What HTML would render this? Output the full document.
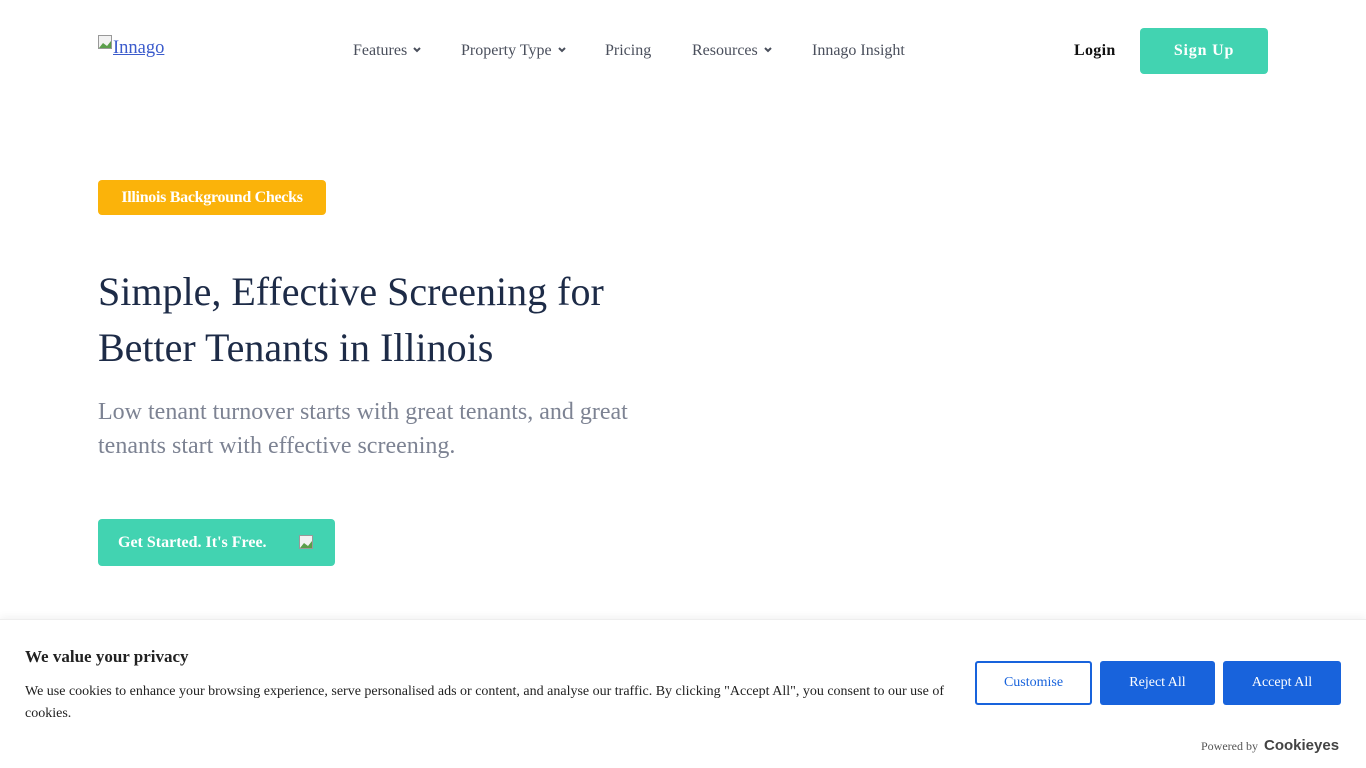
<!DOCTYPE html>
<html><head><meta charset="utf-8"><style>
*{margin:0;padding:0;box-sizing:border-box}
body{width:1366px;height:768px;overflow:hidden;background:#fff;font-family:"Liberation Serif",serif;position:relative}
.a{position:absolute;white-space:nowrap}
.nav{font-size:16px;color:#4a4f5c;top:42px}
.chev{display:inline-block;width:8px;height:6px;margin-left:6px;vertical-align:2px}
.bi{display:inline-block;width:16px;height:15px;vertical-align:-1px}
.btn{position:absolute;display:flex;align-items:center;justify-content:center;font-size:14px;border-radius:3px}
</style></head><body>
<div class="a" style="left:98px;top:35px;font-size:18.5px;color:#3b5bcc;text-decoration:underline">
<svg class="bi" viewBox="0 0 16 15" style="vertical-align:3px"><rect x=".5" y=".5" width="13" height="13" fill="#f2f2f2" stroke="#999"/><path d="M1 13 L5 8 L9 11 L13 6 L13 13Z" fill="#5a9e4a"/></svg><span style="margin-left:-1px">Innago</span></div>
<div class="a nav" style="left:353px">Features<svg class="chev" viewBox="0 0 8 6"><path d="M1 1l3 3 3-3" stroke="#4a4f5c" stroke-width="2" fill="none"/></svg></div>
<div class="a nav" style="left:461px">Property Type<svg class="chev" viewBox="0 0 8 6"><path d="M1 1l3 3 3-3" stroke="#4a4f5c" stroke-width="2" fill="none"/></svg></div>
<div class="a nav" style="left:605px">Pricing</div>
<div class="a nav" style="left:692px">Resources<svg class="chev" viewBox="0 0 8 6"><path d="M1 1l3 3 3-3" stroke="#4a4f5c" stroke-width="2" fill="none"/></svg></div>
<div class="a nav" style="left:812px">Innago Insight</div>
<div class="a" style="left:1074px;top:42px;font-size:16px;font-weight:bold;color:#111;letter-spacing:.3px">Login</div>
<div class="btn" style="left:1140px;top:28px;width:128px;height:46px;background:#42d3b1;color:#fff;font-weight:bold;font-size:16px;letter-spacing:.8px;border-radius:4px">Sign Up</div>
<div class="btn" style="left:98px;top:180px;width:228px;height:35px;background:#fbb30a;color:#fff;font-size:16px;font-weight:bold;letter-spacing:-.3px;border-radius:4px">Illinois Background Checks</div>
<div class="a" style="left:98px;top:264px;font-size:40px;line-height:56px;color:#1d2b47">Simple, Effective Screening for<br>Better Tenants in Illinois</div>
<div class="a" style="left:98px;top:396px;font-size:24px;line-height:33.5px;color:#7d8393">Low tenant turnover starts with great tenants, and great<br>tenants start with effective screening.</div>
<div class="btn" style="left:98px;top:519px;width:237px;height:47px;background:#42d3b1;color:#fff;font-weight:bold;font-size:16px;justify-content:flex-start;padding-left:20px;border-radius:4px">Get Started. It's Free.<svg class="bi" viewBox="0 0 16 15" style="margin-left:32px"><rect x=".5" y=".5" width="13" height="13" fill="#f2f2f2" stroke="#999"/><path d="M1 13 L5 8 L9 11 L13 6 L13 13Z" fill="#5a9e4a"/></svg></div>
<div class="a" style="left:0;top:619px;width:1366px;height:149px;background:#fff;border-top:1px solid #eee;box-shadow:0 -2px 8px rgba(0,0,0,.06)"></div>
<div class="a" style="left:25px;top:647px;font-size:17px;font-weight:bold;color:#212121">We value your privacy</div>
<div class="a" style="left:25px;top:681px;font-size:14px;line-height:22px;color:#212121;white-space:normal;width:930px">We use cookies to enhance your browsing experience, serve personalised ads or content, and analyse our traffic. By clicking "Accept All", you consent to our use of cookies.</div>
<div class="btn" style="left:975px;top:661px;width:117px;height:44px;border:2px solid #1863dc;color:#1863dc">Customise</div>
<div class="btn" style="left:1100px;top:661px;width:115px;height:44px;background:#1863dc;color:#fff">Reject All</div>
<div class="btn" style="left:1223px;top:661px;width:118px;height:44px;background:#1863dc;color:#fff">Accept All</div>
<div class="a" style="left:1201px;top:737px;font-size:12px;color:#555">Powered by <span style="font-family:'Liberation Sans',sans-serif;font-weight:bold;font-size:15px;color:#444;margin-left:3px">Cookieyes</span></div>
</body></html>
